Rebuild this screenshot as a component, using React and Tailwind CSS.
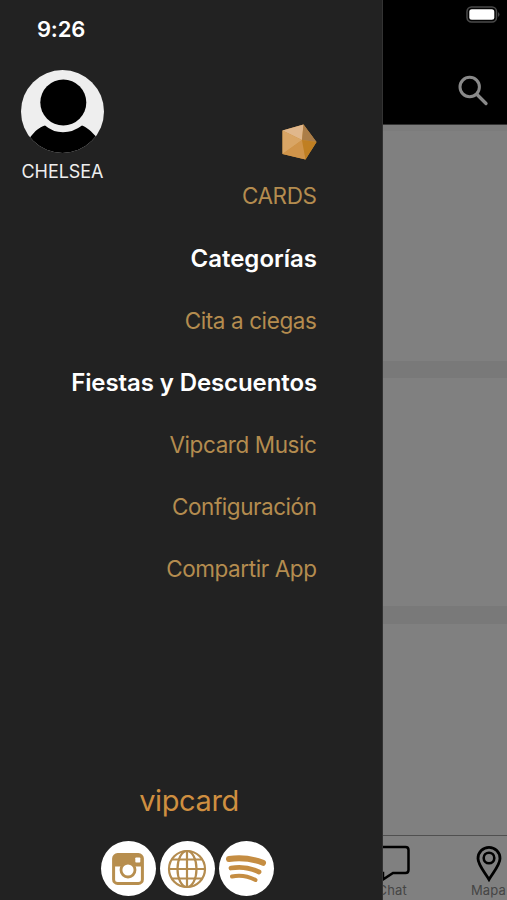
import React from "react";

const links = [
  { label: "Categorías", style: "font-semibold text-[24px] tracking-[0px] text-white" },
  { label: "Cita a ciegas", style: "text-[22.5px] tracking-[-0.4px] mr-[0.5px] text-[#b48c4f]" },
  { label: "Fiestas y Descuentos", style: "font-semibold text-[24px] tracking-[-0.1px] text-white" },
  { label: "Vipcard Music", style: "text-[22.5px] tracking-[-0.42px] mr-[0.5px] text-[#b48c4f]" },
  { label: "Configuración", style: "text-[22.5px] tracking-[-0.45px] mr-[0.5px] text-[#b48c4f]" },
  { label: "Compartir App", style: "text-[22.5px] tracking-[-0.42px] mr-[0.5px] text-[#b48c4f]" },
];

function Avatar() {
  return (
    <svg className="block size-[83px]" viewBox="0 0 83 83">
      <defs>
        <clipPath id="disc"><circle cx="41.5" cy="41.5" r="41.5" /></clipPath>
      </defs>
      <g clipPath="url(#disc)">
        <rect width="83" height="83" fill="#eeeeee" />
        <path d="M9 67.5C14 61 18 57.5 24 55.5Q32 62.3 42 62.3T61 55.5C66 57.5 70 61 76 67.5V83H9Z" fill="#000" />
        <circle cx="42.3" cy="32.5" r="23" fill="#000" />
      </g>
    </svg>
  );
}

function Gem() {
  return (
    <svg className="block h-[36px] w-[35px]" viewBox="0 0 35 36">
      <path d="M.5 6.5 21.5.5 34.5 18 23.5 35.5.5 30Z" fill="#cb913f" />
      <path d="M.5 6.5 21.5.5 20 16Z" fill="#e0b78c" />
      <path d="M21.5.5 34.5 18 20 16Z" fill="#ab7d48" />
      <path d="M.5 6.5 20 16 .5 30Z" fill="#d9a565" />
      <path d="M.5 30 20 16 23.5 35.5Z" fill="#d0944a" />
      <path d="M20 16 34.5 18 23.5 35.5Z" fill="#c07f22" />
    </svg>
  );
}

function Instagram() {
  return (
    <svg className="size-[32px]" viewBox="0 0 32 32" fill="none" stroke="#b78e4e">
      <rect x="1.6" y="1.6" width="28.8" height="28.8" rx="4" strokeWidth="3" />
      <path d="M2 13.5V5Q2 2 5 2H27Q30 2 30 5V13.5Z" fill="#b78e4e" stroke="none" />
      <circle cx="16" cy="17" r="7" fill="#fff" strokeWidth="2.8" />
      <rect x="23.3" y="4.5" width="5" height="5" rx=".8" fill="#fff" stroke="none" />
    </svg>
  );
}

function Globe() {
  return (
    <svg className="size-[40px]" viewBox="0 0 40 40" fill="none" stroke="#b48c4f" strokeWidth="2.2">
      <circle cx="20" cy="20" r="18" />
      <ellipse cx="20" cy="20" rx="9.5" ry="18" />
      <path d="M20 2V38M2 20H38M5 10.5H35M5 29.5H35" />
    </svg>
  );
}

function Spotify() {
  return (
    <svg className="h-[28px] w-[42px]" viewBox="0 0 42 28" fill="none" stroke="#c58d42" strokeLinecap="round">
      <path d="M4 4Q22 1.5 38 7.8" strokeWidth="6" />
      <path d="M6 13Q21 10.5 34 17" strokeWidth="4.8" />
      <path d="M7 21.5Q19 19 30.5 25" strokeWidth="4" />
    </svg>
  );
}

function Badge({ children }) {
  return <div className="flex size-[55px] items-center justify-center rounded-full bg-white">{children}</div>;
}

function Drawer() {
  return (
    <aside className="flex h-full w-[382px] shrink-0 flex-col bg-[#222222]">
      <div className="h-[70px] pl-[37px] pt-[14px] text-[22px] font-semibold leading-[30px] tracking-[-0.2px] text-white">9:26</div>
      <div className="flex h-[158px] justify-between pl-[21px] pr-[65px]">
        <div className="flex w-[83px] flex-col items-center">
          <Avatar />
          <span className="mt-[6px] whitespace-nowrap text-[18px] leading-[26px] tracking-[-0.05px] text-[#eeeeee]">CHELSEA</span>
        </div>
        <div className="flex flex-col items-end pt-[54px]">
          <Gem />
          <span className="mr-[0.5px] mt-[5px] flex h-[62px] items-center text-[22.5px] tracking-[-0.42px] text-[#b48c4f]">CARDS</span>
        </div>
      </div>
      <nav className="flex flex-col items-end pr-[65px]">
        {links.map((l) => (
          <div key={l.label} className="flex h-[62px] items-center whitespace-nowrap">
            <span className={l.style}>{l.label}</span>
          </div>
        ))}
      </nav>
      <footer className="mt-auto flex flex-col items-center pb-[4px] pr-[8px]">
        <div className="h-[58px] pl-[4px] text-[29px] leading-[36px] tracking-[-0.4px] text-[#cf8f40]">vipcard</div>
        <div className="flex gap-[4px]">
          <Badge><Instagram /></Badge>
          <Badge><Globe /></Badge>
          <Badge><Spotify /></Badge>
        </div>
      </footer>
    </aside>
  );
}

function Backdrop() {
  return (
    <main className="flex h-full min-w-0 flex-1 flex-col overflow-hidden border-l border-[#333333] bg-[#808080]">
      <header className="flex h-[125px] flex-col items-end border-b border-[#333333] bg-black">
        <svg className="mr-[7px] mt-[6px] h-[17px] w-[34px] shrink-0" viewBox="0 0 34 17">
          <rect x="1" y="1" width="29.5" height="15" rx="4.5" fill="#050505" stroke="#4a4a4a" strokeWidth="1.5" />
          <rect x="3.3" y="3.2" width="25" height="10.5" rx="2.5" fill="#fff" />
          <path d="M32 6Q35 8.3 32 11Z" fill="#444" />
        </svg>
        <svg className="mr-[18px] mt-[52px] size-[31px] shrink-0" viewBox="0 0 31 31" fill="none" stroke="#898989" strokeLinecap="round">
          <circle cx="11.7" cy="12" r="9.7" strokeWidth="3" />
          <path d="M19.5 20 28 28.5" strokeWidth="3.3" />
        </svg>
      </header>
      <div className="h-[6px] bg-[#7c7c7c]" />
      <div className="h-[230px]" />
      <div className="h-[17px] bg-[#797979]" />
      <div className="h-[228px]" />
      <div className="h-[18px] bg-[#797979]" />
      <div className="flex-1" />
      <footer className="flex h-[65px] justify-between border-t border-[#505050] text-[13px] leading-[15px] text-[#454545]">
        <div className="-ml-[8px] flex w-[35px] flex-col items-end pt-[9px]">
          <svg className="block h-[37px] w-[35px] shrink-0" viewBox="0 0 35 37" fill="none" stroke="#000" strokeWidth="2.5">
            <path d="M2 2H30.5Q33.5 2 33.5 5V25Q33.5 28 30.5 28H18L8 34.5V28H2Z" />
          </svg>
          <span className="mr-[3px] mt-[1px] tracking-[0.2px]">Chat</span>
        </div>
        <div className="flex w-[37px] flex-col items-center pt-[9px]">
          <svg className="block h-[37px] w-[28px] shrink-0" viewBox="0 0 28 37" fill="none" stroke="#000" strokeWidth="2.8">
            <path d="M14 34.5C10 27.5 3 20 3 13.5A11 11.2 0 0 1 25 13.5C25 20 18 27.5 14 34.5Z" />
            <circle cx="14" cy="13" r="5.3" strokeWidth="2.6" />
          </svg>
          <span className="mt-[1px] tracking-[0.2px]">Mapa</span>
        </div>
      </footer>
    </main>
  );
}

export default function App() {
  return (
    <div className="flex h-[900px] w-[507px] overflow-hidden bg-[#222222] font-['Inter','Liberation_Sans',sans-serif]">
      <Drawer />
      <Backdrop />
    </div>
  );
}
